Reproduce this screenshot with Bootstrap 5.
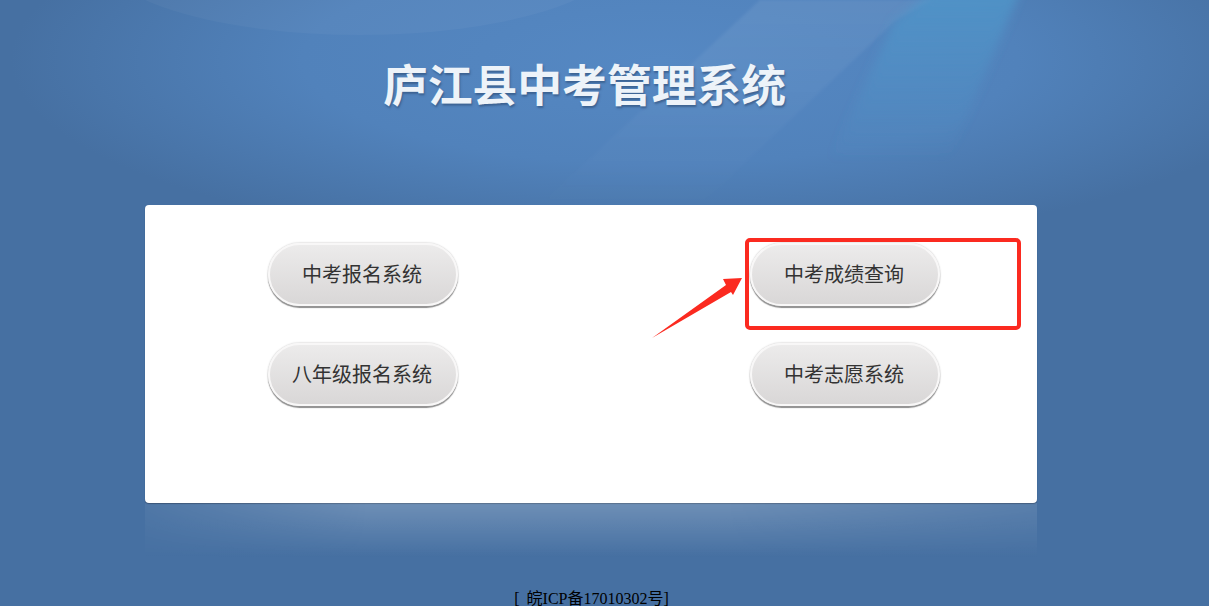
<!DOCTYPE html>
<html lang="zh-CN">
<head>
  <meta charset="UTF-8" />
  <meta name="viewport" content="width=device-width, initial-scale=1.0"/>
  <title>庐江县中考管理系统</title>
  <link href="https://cdn.jsdelivr.net/npm/bootstrap@5.3.0/dist/css/bootstrap.min.css" rel="stylesheet"/>
  <style>
    html, body { height: 100%; overflow: hidden; }
    body {
      font-family: "Liberation Serif", "Noto Sans CJK SC", serif;
      background-color: #4670a2;
    }
    .page-bg { position: absolute; left: 0; top: 0; z-index: -1; }
    .top-title { height: 205px; padding: 57px 40px 0 0; }
    .top-title h1 {
      font-family: "Liberation Serif", "Noto Sans CJK SC", serif;
      font-size: 44.8px; font-weight: 700; line-height: 60px; margin: 0;
      color: #edf3f9; text-shadow: 1px 2px 2px rgba(40,70,110,.55);
    }
    .main-panel {
      width: 892px; height: 298px; margin-left: 145px;
      border-radius: 4px; padding: 38px 97px 0 123px;
      box-shadow: 0 1px 1px rgba(30,50,80,.6);
    }
    .sys-grid { display: grid; grid-template-columns: 190px 190px; row-gap: 37px; justify-content: space-between; }
    .sys-btn {
      height: 63px; padding: 0 2px 0 0; border: 2px solid #f8f7f7; border-radius: 32px;
      font-size: 20px; color: #333; line-height: 1;
      background: linear-gradient(180deg, #ecebeb, #d9d7d7);
      box-shadow: 0 0 2px #b5b4b4, 0 2px 1px #8a8a8a;
    }
    .sys-btn:hover { color: #333; background: linear-gradient(180deg, #ecebeb, #d9d7d7); border-color: #f8f7f7; }
    .mark-box {
      position: absolute; left: 600px; top: 33px; width: 276px; height: 92px;
      border: 4px solid #fb2a20; border-radius: 5px; pointer-events: none;
    }
    .mark-arrow { position: absolute; left: 505px; top: 70px; pointer-events: none; }
    .panel-shine {
      width: 892px; height: 54px; margin-left: 145px;
      background: linear-gradient(180deg, rgba(255,255,255,.22), rgba(255,255,255,0));
      -webkit-mask-image: linear-gradient(90deg, rgba(0,0,0,.25), #000 25%, #000 65%, rgba(0,0,0,.5));
      mask-image: linear-gradient(90deg, rgba(0,0,0,.25), #000 25%, #000 65%, rgba(0,0,0,.5));
    }
    .record-line { font-size: 16px; line-height: 18px; color: #000; margin-top: 33px; padding-right: 26px; word-spacing: 3px; white-space: pre; }
  </style>
</head>
<body>
  <!-- background artwork -->
  <svg class="page-bg" width="1209" height="260" viewBox="0 0 1209 260" aria-hidden="true">
    <defs>
      <radialGradient id="glow" gradientUnits="userSpaceOnUse" cx="0" cy="0" r="1" gradientTransform="translate(660 60) scale(650 190)">
        <stop offset="0" stop-color="#5588c3"/>
        <stop offset=".55" stop-color="#5182bb"/>
        <stop offset="1" stop-color="#5182bb" stop-opacity="0"/>
      </radialGradient>
      <linearGradient id="fadeA" x1="0" y1="0" x2="0" y2="1">
        <stop offset="0" stop-color="#fff" stop-opacity=".07"/>
        <stop offset=".7" stop-color="#fff" stop-opacity=".02"/>
        <stop offset="1" stop-color="#fff" stop-opacity="0"/>
      </linearGradient>
      <linearGradient id="fadeB" x1="0" y1="0" x2="0" y2="1">
        <stop offset="0" stop-color="#4f98cb" stop-opacity=".75"/>
        <stop offset="1" stop-color="#4f98cb" stop-opacity="0"/>
      </linearGradient>
      <filter id="soft" x="-20%" y="-20%" width="140%" height="140%"><feGaussianBlur stdDeviation="1.5"/></filter>
      <filter id="softer" x="-20%" y="-20%" width="140%" height="140%"><feGaussianBlur stdDeviation="5"/></filter>
    </defs>
    <rect width="1209" height="260" fill="url(#glow)"/>
    <polygon points="760,0 933,0 894,22 700,205 540,205" fill="url(#fadeA)" filter="url(#soft)"/>
    <polygon points="933,-10 1021,-10 948,160 830,160 894,22" fill="url(#fadeB)" filter="url(#softer)"/>
    <ellipse cx="360" cy="-45" rx="260" ry="80" fill="#fff" fill-opacity=".035"/>
  </svg>

  <header class="top-title text-center">
    <h1>庐江县中考管理系统</h1>
  </header>

  <main class="main-panel bg-white position-relative">
    <div class="sys-grid">
      <button type="button" class="btn sys-btn">中考报名系统</button>
      <button type="button" class="btn sys-btn">中考成绩查询</button>
      <button type="button" class="btn sys-btn">八年级报名系统</button>
      <button type="button" class="btn sys-btn">中考志愿系统</button>
    </div>
    <div class="mark-box"></div>
    <svg class="mark-arrow" width="96" height="66" viewBox="0 0 96 66">
      <polygon fill="#fb2a20" points="2,63 76,10 73,4 92,3 83,20 81,17"/>
    </svg>
  </main>

  <div class="panel-shine"></div>
  <footer class="record-line text-center">[ 皖ICP备17010302号]</footer>

  <script src="https://cdn.jsdelivr.net/npm/bootstrap@5.3.0/dist/js/bootstrap.bundle.min.js"></script>
</body>
</html>
